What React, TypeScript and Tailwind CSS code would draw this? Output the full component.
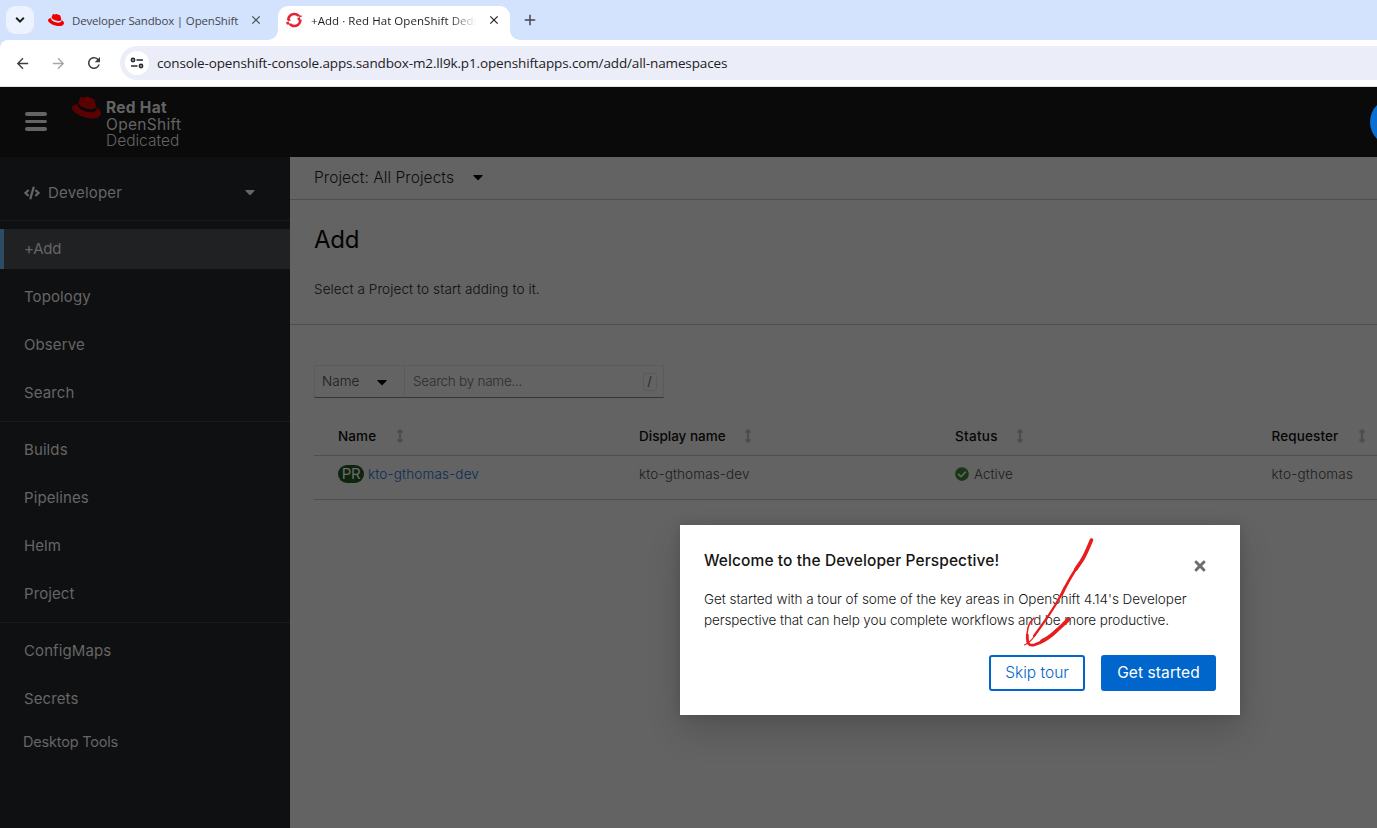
import React from "react";
import { SiRedhat, SiRedhatopenshift } from "react-icons/si";
import { FaCode, FaCaretDown, FaTimes, FaCheckCircle, FaArrowsAltV } from "react-icons/fa";
import { MdArrowBack, MdArrowForward, MdRefresh, MdClose, MdAdd } from "react-icons/md";

function TuneIcon() {
  return (
    <svg viewBox="0 0 14 12" className="h-3 w-3.5" fill="none" stroke="#27292c" strokeWidth="1.6">
      <circle cx="3" cy="3" r="1.6" />
      <path d="M6.5 3H13M1 9h6.500" />
      <circle cx="11" cy="9" r="1.6" />
    </svg>
  );
}

function TabStrip() {
  return (
    <div className="flex h-10 items-start bg-[#d3e2fd] pl-1.5">
      <div className="mt-1.5 flex size-7 shrink-0 items-center justify-center rounded-[9px] bg-[#ecf2fe]">
        <svg viewBox="0 0 10 8" className="h-2 w-2.5" fill="none" stroke="#1f1f1f" strokeWidth="2">
          <path d="M1.200 1.800L5 5.600 8.800 1.800" />
        </svg>
      </div>
      <div className="ml-3.5 flex h-10 w-[230px] shrink-0 items-center">
        <SiRedhat className="size-4 text-[#ee0000]" />
        <span className="mt-px ml-2 w-[170px] text-[11.5px] tracking-[-0.16px] whitespace-nowrap text-[#45484d]">Developer Sandbox | OpenShift</span>
        <MdClose className="ml-[7px] size-3.5 text-[#45484d]" />
      </div>
      <div className="relative mt-1.5 flex h-[34px] w-[232px] shrink-0 items-center rounded-t-[10px] bg-white pl-2">
        <svg className="absolute bottom-0 -left-2.5 size-2.5" viewBox="0 0 10 10"><path d="M10 0v10H0A10 10 0 0 0 10 0Z" fill="#fff" /></svg>
        <svg className="absolute -right-2.5 bottom-0 size-2.5" viewBox="0 0 10 10"><path d="M0 0v10h10A10 10 0 0 1 0 0Z" fill="#fff" /></svg>
        <SiRedhatopenshift className="mb-1.5 size-4 text-[#e22434]" />
        <span className="mb-[5px] ml-[9px] w-[169px] bg-gradient-to-r from-[#1f1f1f] from-82% to-transparent to-98% bg-clip-text text-[11.5px] tracking-[0.06px] whitespace-nowrap text-transparent">+Add · Red Hat OpenShift Dedi</span>
        <MdClose className="mb-1.5 ml-[7px] size-3.5 text-[#1f1f1f]" />
      </div>
      <MdAdd className="mt-[11px] ml-[11px] size-[18px] text-[#45484d]" />
    </div>
  );
}

function Toolbar() {
  return (
    <div className="bg-[#d3e2fd]">
      <div className="flex h-[47px] items-center rounded-tl-lg border-b border-[#dfe1e5] bg-white pl-3.5">
        <MdArrowBack className="size-[17px] text-[#3c4043]" />
        <MdArrowForward className="ml-[19px] size-[17px] text-[#a5a7aa]" />
        <MdRefresh className="ml-[18px] size-[18px] text-[#3c4043]" />
        <div className="-mr-5 ml-[17px] flex h-[34px] flex-1 items-center rounded-full bg-[#ebeef8] pl-[5px]">
          <div className="flex size-6 items-center justify-center rounded-full bg-white"><TuneIcon /></div>
          <span className="ml-2 text-[13.5px] tracking-[-0.13px] whitespace-nowrap text-[#1f2023]">console-openshift-console.apps.sandbox-m2.ll9k.p1.openshiftapps.com/add/all-namespaces</span>
        </div>
      </div>
    </div>
  );
}

function Masthead() {
  return (
    <header className="relative flex h-[70px] shrink-0 items-start overflow-hidden bg-[#0a0a0a] pl-[25px] text-[#646464]">
      <div className="mt-[25px] flex w-[22px] flex-col gap-1">
        <i className="h-[3.5px] rounded-sm bg-current" />
        <i className="h-[3.5px] rounded-sm bg-current" />
        <i className="h-[3.5px] rounded-sm bg-current" />
      </div>
      <SiRedhat className="mt-[6px] ml-[25px] size-[29px] text-[#5a0202]" />
      <div className="mt-[13px] ml-[5px] flex flex-col text-[15.500px] leading-[16.600px]">
        <span className="font-bold tracking-[0.3px]">Red Hat</span>
        <span className="tracking-[0.3px]">OpenShift</span>
        <span className="font-light">Dedicated</span>
      </div>
      <div className="absolute top-[11px] -right-[41px] size-12 rounded-full bg-[#0a6fd2]" />
    </header>
  );
}

const groups = [
  ["+Add", "Topology", "Observe", "Search"],
  ["Builds", "Pipelines", "Helm", "Project"],
  ["ConfigMaps", "Secrets"],
];

function Sidebar() {
  return (
    <nav className="w-[290px] shrink-0 bg-[#0f1011] text-[15px] tracking-[0.1px] text-[#666666]">
      <div className="flex h-16 items-center border-b border-[#1a1b1c] pt-2 pr-[33px] pl-6">
        <FaCode className="size-4" />
        <span className="mt-px ml-2 tracking-[0.2px]">Developer</span>
        <FaCaretDown className="mb-px ml-auto h-4 w-[14px]" />
      </div>
      {groups.map((group, index) => (
        <ul key={group[0]} className={index ? "flex flex-col gap-2 border-t border-[#1a1b1c] py-2" : "flex flex-col gap-2 py-2"}>
          {group.map((label) => (
            <li key={label} className={label === "+Add" ? "flex h-10 items-center border-l-4 border-[#2e4b64] bg-[#202122] pl-5 tracking-[-0.2px]" : "flex h-10 items-center pl-6"}>
              {label}
            </li>
          ))}
        </ul>
      ))}
      <div className="-mt-[5px] flex h-10 items-center pl-[23px] text-[14.500px] tracking-[-0.2px]">Desktop Tools</div>
    </nav>
  );
}

const columns = "grid grid-cols-[301px_316px_316.500px_1fr] items-center border-b border-[#4f4f4f] pl-6";

function Heading({ label, className, gap }: { label: string; className?: string; gap: string }) {
  return (
    <div className="flex items-center">
      <span className={className}>{label}</span>
      <FaArrowsAltV className={`${gap} h-3.5 w-3 text-[#4d4d4d]`} />
    </div>
  );
}

function Content() {
  return (
    <main className="min-w-0 flex-1 overflow-hidden bg-[#636363] text-[13.500px] font-light text-[#0d0d0d]">
      <div className="flex h-[43px] items-center border-b border-[#4f4f4f] pl-6 text-[15.500px]">
        <span className="tracking-[0.05px]">Project: All Projects</span>
        <FaCaretDown className="mb-0.5 ml-[17px] h-4 w-[14px] text-[#030303]" />
      </div>
      <section className="h-[125px] border-b border-[#4f4f4f] pt-[22px] pl-6">
        <h1 className="text-2xl leading-9 font-normal tracking-[-0.3px] text-[#030303]">Add</h1>
        <p className="mt-[21px] leading-[21px] tracking-[0.1px]">Select a Project to start adding to it.</p>
      </section>
      <div className="mt-10 ml-6 flex h-[33px] w-[350px] border border-[#5b5b5b] border-b-[#363636] text-[#1a1a1a]">
        <div className="flex w-[90px] items-center border-r border-[#5b5b5b] pl-[7px]">
          <span>Name</span>
          <FaCaretDown className="ml-4 h-4 w-[14px] text-[#030303]" />
        </div>
        <div className="flex flex-1 items-center pr-1.5 pl-2">
          <span className="tracking-[-0.25px] text-[#2c2d2e]">Search by name...</span>
          <kbd className="ml-auto flex h-[18px] w-[14px] items-center justify-center rounded-[3px] border border-[#5a5a5a] pr-px font-[Inter] text-[13px]">/</kbd>
        </div>
      </div>
      <div className="mt-[19px] ml-6">
        <div className={`${columns} h-[39px] font-medium text-[#060606]`}>
          <Heading label="Name" className="tracking-[0.1px]" gap="ml-[18px]" />
          <Heading label="Display name" gap="ml-4" />
          <Heading label="Status" className="tracking-[0.3px]" gap="ml-4" />
          <Heading label="Requester" className="tracking-[0.13px]" gap="ml-[18px]" />
        </div>
        <div className={`${columns} h-11 pb-[6px] text-[#1b1b1b]`}>
          <div className="flex items-center">
            <span className="mb-px flex h-[18px] w-[26px] items-center justify-center rounded-full bg-[#10230f] text-[15px] font-normal tracking-[-0.3px] text-[#6c6c6c]">PR</span>
            <span className="ml-1 tracking-[0.15px] text-[#092c55]">kto-gthomas-dev</span>
          </div>
          <span className="tracking-[0.12px]">kto-gthomas-dev</span>
          <div className="flex items-center">
            <FaCheckCircle className="mb-px size-3.5 text-[#193616]" />
            <span className="ml-[5px]">Active</span>
          </div>
          <span className="tracking-[0.2px]">kto-gthomas</span>
        </div>
      </div>
    </main>
  );
}

function TourModal() {
  return (
    <div className="absolute top-[525px] left-[680px] h-[190px] w-[560px] bg-white px-6 shadow-[0_16px_32px_rgba(3,3,3,0.16),0_0_10px_rgba(3,3,3,0.12)]">
      <div className="flex items-start justify-between pt-6">
        <h2 className="text-[15.500px] leading-6 font-medium tracking-[0.09px] text-[#151515]">Welcome to the Developer Perspective!</h2>
        <FaTimes className="mt-[9px] mr-2 size-4 text-[#6a6e73]" />
      </div>
      <p className="mt-[15px] flex flex-col text-[13.500px] leading-[21px] font-light whitespace-nowrap text-[#151515]">
        <span className="tracking-[-0.04px]">Get started with a tour of some of the key areas in OpenShift 4.14's Developer</span>
        <span className="tracking-[-0.11px]">perspective that can help you complete workflows and be more productive.</span>
      </p>
      <div className="mt-6 flex justify-end gap-4 text-[15.500px]">
        <button className="h-9 w-24 rounded-[3px] border-2 border-[#0066cc] font-light text-[#0066cc]">Skip tour</button>
        <button className="h-9 w-[115px] rounded-[3px] bg-[#0066cc] tracking-[0.1px] text-white">Get started</button>
      </div>
    </div>
  );
}

function PenArrow() {
  return (
    <svg className="pointer-events-none absolute top-[530px] left-[1015px]" width="90" height="125" viewBox="1015 530 90 125" fill="none" stroke="#e71d1f" strokeLinecap="round" strokeLinejoin="round">
      <path d="M1091.500 540C1088 548 1086 554 1081.500 561L1076 569" strokeWidth="3.600" />
      <path d="M1080 563C1073 573 1067 583 1062 594" strokeWidth="2.800" />
      <path d="M1065 587C1058 602 1050 614 1042 625L1034 636" strokeWidth="2.200" />
      <path d="M1040 628C1034 637 1031 642 1024.500 645" strokeWidth="1.100" />
      <path d="M1034 618C1028 623 1026.500 632 1027.500 640" strokeWidth="1.500" />
      <path d="M1027.300 635C1027 644 1029 646 1034 645C1043 642 1051 637 1057 630" strokeWidth="2.800" />
      <path d="M1042 641C1052 637 1060 627 1068.500 619.500" strokeWidth="3.700" />
    </svg>
  );
}

export default function App() {
  return (
    <div className="relative flex h-[828px] w-full flex-col overflow-hidden font-[Inter,sans-serif]">
      <div className="h-[87px] shrink-0 font-['Open_Sans',sans-serif]">
        <TabStrip />
        <Toolbar />
      </div>
      <Masthead />
      <div className="flex min-h-0 flex-1">
        <Sidebar />
        <Content />
      </div>
      <TourModal />
      <PenArrow />
    </div>
  );
}
